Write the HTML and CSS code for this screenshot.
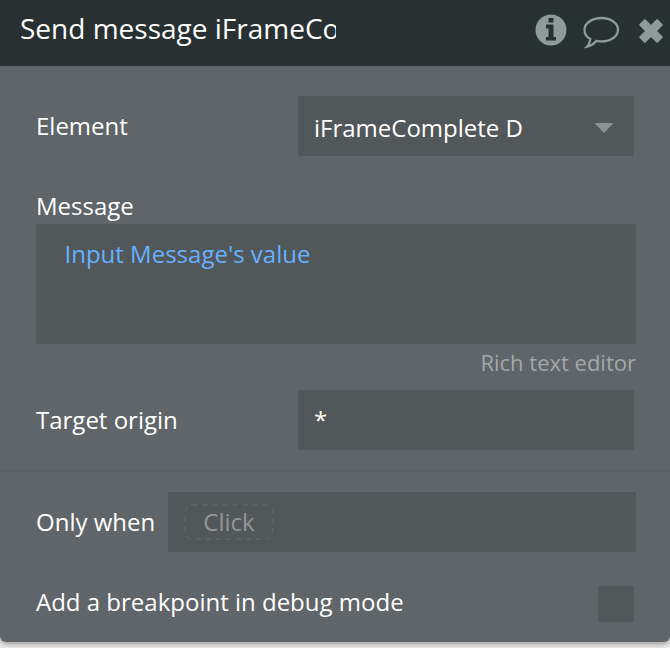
FILE: index.html
```html
<!DOCTYPE html>
<html lang="en">
<head>
  <meta charset="UTF-8">
  <title>Send message</title>
  <meta name="viewport" content="width=device-width, initial-scale=1.0">
  <link rel="stylesheet" href="styles.css">
</head>
<body>

  <div class="editor">
    <div class="title-bar">
      <div class="title">Send message iFrameCo</div>
      <div class="actions">
        <svg class="icon-info" viewBox="0 0 32 32"><circle cx="16" cy="16" r="15.500"/><path class="cut" d="M13.500 4h5v4.500h-5zM11 10.500h7.500V23H21v3.500H11V23h2.500v-8.500H11z"/></svg>
        <svg class="icon-comment" viewBox="0 0 38 34"><path d="M19.500 3C29 3 36 8.300 36 14.700S29 26.400 19.500 26.400c-1.800 0-3.500-.2-5.100-.6-2.500 3.200-5.200 5-9.400 5.900 2-2.200 3-4.600 3.300-7.700C4.300 21.800 2.500 18.500 2.500 14.700 2.500 8.300 10 3 19.500 3z"/></svg>
        <svg class="icon-close" viewBox="0 0 26 26"><path class="plus" d="M10 1h6v9h9v6h-9v9h-6v-9H1v-6h9z"/></svg>
      </div>
    </div>

    <div class="content">
      <div class="row">
        <span class="label">Element</span>
        <div class="dropdown">
          <span>iFrameComplete D</span>
          <svg class="caret" viewBox="0 0 18 10"><path d="M1 0h16q1 0 .5 1L10 9q-1 1-2 0L.5 1Q0 0 1 0z"/></svg>
        </div>
      </div>

      <div class="message">
        <div class="label">Message</div>
        <div class="composer"><span class="dynamic">Input Message's value</span></div>
        <div class="rich-text">Rich text editor</div>
      </div>

      <div class="row">
        <span class="label">Target origin</span>
        <div class="input">*</div>
      </div>
    </div>

    <div class="conditions">
      <div class="row">
        <span class="label">Only when</span>
        <div class="condition"><span class="placeholder">Click</span></div>
      </div>
      <div class="row row-breakpoint">
        <span class="label">Add a breakpoint in debug mode</span>
        <div class="checkbox"></div>
      </div>
    </div>
  </div>

</body>
</html>
```
FILE: styles.css
```css
* {
  box-sizing: border-box;
}

body {
  margin: 0;
  height: 648px;
  overflow: hidden;
  background: #f0f0f0;
  font-family: "Open Sans", sans-serif;
  font-size: 24px;
  color: #fff;
}

.editor {
  height: 642px;
  background: #606569;
  border-radius: 0 0 6px 6px;
  box-shadow: 0 2px 6px rgba(0, 0, 0, 0.4);
  overflow: hidden;
}

.title-bar {
  display: flex;
  justify-content: space-between;
  height: 66px;
  padding: 0 6px 0 20px;
  background: #283032;
}

.title {
  width: 316px;
  font-size: 28px;
  line-height: 56px;
  white-space: nowrap;
  overflow: hidden;
}

.actions {
  display: flex;
  align-items: center;
  height: 62px;
}

.actions svg {
  fill: #8f9a9b;
}

.icon-info {
  width: 32px;
  height: 32px;
  margin: 0 15px 2px 0;
}

.actions .icon-info .cut {
  fill: #283032;
}

.actions .icon-comment {
  width: 38px;
  height: 34px;
  margin: 2px 18px 0 0;
  fill: none;
  stroke: #8f9a9b;
  stroke-width: 2.3;
}

.icon-close {
  width: 26px;
  height: 26px;
  stroke: #8f9a9b;
  stroke-width: 2.5;
  stroke-linejoin: round;
  transform: rotate(45deg);
}

.content {
  height: 404px;
  padding: 30px 36px 0;
}

.row {
  display: flex;
  align-items: center;
  justify-content: space-between;
  height: 60px;
}

.label {
  line-height: 34px;
}

.dropdown,
.input {
  display: flex;
  align-items: center;
  justify-content: space-between;
  width: 336px;
  height: 60px;
  padding: 3px 21px 0 16px;
  border-radius: 2px;
  background: #525759;
}

.input {
  padding: 0 16px 2px;
}

.caret {
  width: 18px;
  height: 10px;
  fill: #8e9294;
}

.message {
  width: 600px;
  padding-top: 33px;
}

.message .label {
  height: 35px;
}

.composer {
  height: 120px;
  padding: 13px 28.5px;
  border-radius: 2px;
  background: #525759;
}

.dynamic {
  color: #65b1ff;
}

.rich-text {
  height: 46px;
  font-size: 22px;
  line-height: 36px;
  text-align: right;
  color: #a5a7a8;
}

.conditions {
  padding: 20px 36px 0;
  border-top: 2px solid #5a5f62;
}

.condition {
  display: flex;
  align-items: center;
  width: 468px;
  height: 60px;
  margin-right: -2px;
  padding-left: 16px;
  border-radius: 2px;
  background: #525759;
}

.placeholder {
  width: 90px;
  height: 36px;
  border: 2px dashed #5c6164;
  border-radius: 8px;
  line-height: 32px;
  text-align: center;
  color: #959697;
}

.row-breakpoint {
  margin-top: 22px;
}

.row-breakpoint .label {
  padding-bottom: 4px;
}

.checkbox {
  width: 36px;
  height: 36px;
  border-radius: 2px;
  background: #525759;
}
```
